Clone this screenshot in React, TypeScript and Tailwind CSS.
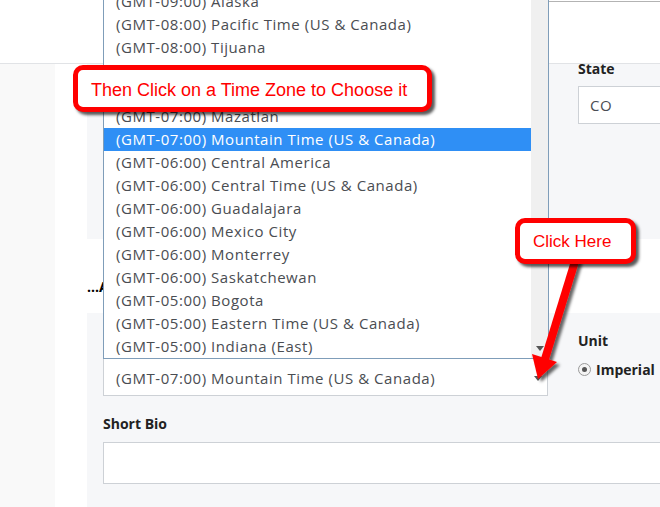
import React from "react";

const zones = [
  "(GMT-09:00) Alaska",
  "(GMT-08:00) Pacific Time (US & Canada)",
  "(GMT-08:00) Tijuana",
  "(GMT-07:00) Arizona",
  "(GMT-07:00) Chihuahua",
  "(GMT-07:00) Mazatlan",
  "(GMT-07:00) Mountain Time (US & Canada)",
  "(GMT-06:00) Central America",
  "(GMT-06:00) Central Time (US & Canada)",
  "(GMT-06:00) Guadalajara",
  "(GMT-06:00) Mexico City",
  "(GMT-06:00) Monterrey",
  "(GMT-06:00) Saskatchewan",
  "(GMT-05:00) Bogota",
  "(GMT-05:00) Eastern Time (US & Canada)",
  "(GMT-05:00) Indiana (East)",
];

const selected = "(GMT-07:00) Mountain Time (US & Canada)";

const DownTriangle = () => (
  <svg width="8" height="5" viewBox="0 0 8 5">
    <path d="M0 0 L8 0 L4 5 Z" fill="#555" />
  </svg>
);

const TimeZoneList = () => (
  <div className="absolute left-[103px] top-0 flex h-[359px] w-[446px] overflow-hidden border-x border-b border-[#7f9db9] bg-white">
    <ul className="-mt-[10px] flex-1">
      {zones.map((z) => (
        <li
          key={z}
          className={
            z === selected
              ? "h-[23px] bg-[#2f8ff5] pl-[12px] leading-[23px] text-white"
              : "h-[23px] pl-[12px] leading-[23px] text-[#4a4d52]"
          }
        >
          {z}
        </li>
      ))}
    </ul>
    <div className="flex w-[17px] flex-col items-center justify-end bg-[#f0f0f0] pb-[7px]">
      <DownTriangle />
    </div>
  </div>
);

const Callout = ({ className, children }: { className: string; children: React.ReactNode }) => (
  <div
    className={`absolute flex items-center rounded-[10px] border-[5px] border-[#ff0000] bg-white font-['Liberation_Sans',Arial,sans-serif] text-[#ff0000] shadow-[3px_3px_3px_rgba(0,0,0,0.65)] ${className}`}
  >
    {children}
  </div>
);

export default function App() {
  return (
    <div className="relative h-[507px] w-[660px] overflow-hidden bg-white font-['Open_Sans',sans-serif] text-[15px] tracking-[0.55px]">
      {/* header */}
      <div className="flex h-[64px] border-b border-[#e1e3e6] bg-white">
        <div className="w-[548px]" />
        <div className="mt-[1px] flex-1 border-t border-[#b3b3b3]" />
      </div>

      <div className="flex h-[443px]">
        <div className="w-[55px] bg-[#f9f9f9]" />
        <div className="w-[32px] bg-white" />
        <div className="flex w-[573px] flex-col">
          {/* first group */}
          <div className="flex h-[175px] gap-[30px] overflow-hidden bg-[#f6f7f9] pl-[16px]">
            <div className="w-[445px] shrink-0" />
            <div className="w-[200px] shrink-0">
              <div className="-mt-[4px] text-[14px] font-bold leading-[17px] tracking-normal text-[#222]">State</div>
              <div className="mt-[9px] flex h-[38px] items-center border border-[#cdd1d6] bg-white pl-[11px] text-[#4a4d52]">
                CO
              </div>
            </div>
          </div>

          {/* tab strip */}
          <div className="h-[74px] bg-white pt-[36px]">
            <span className="text-[14px] font-bold tracking-normal text-black">...A</span>
          </div>

          {/* second group */}
          <div className="flex-1 bg-[#f6f7f9] pl-[16px]">
            <div className="flex gap-[30px]">
              <div className="w-[445px] shrink-0 pt-[45px]">
                <div className="flex h-[38px] items-center justify-between border border-[#cdd1d6] bg-white pl-[12px] pr-[5px] pt-[3px] text-[#4a4d52]">
                  <span>{selected}</span>
                  <DownTriangle />
                </div>
              </div>
              <div className="w-[200px] shrink-0">
                <div className="pt-[18px] text-[14px] font-bold leading-[20px] tracking-normal text-[#222]">Unit</div>
                <label className="mt-[8px] flex items-center gap-[5px] text-[14px] font-bold tracking-normal text-[#222]">
                  <span className="flex h-[13px] w-[13px] items-center justify-center rounded-full border border-[#9a9a9a] bg-[#f4f4f4]">
                    <span className="h-[5px] w-[5px] rounded-full bg-[#555]" />
                  </span>
                  Imperial
                </label>
              </div>
            </div>
            <div className="mt-[18px] text-[14px] font-bold leading-[20px] tracking-normal text-[#222]">Short Bio</div>
            <div className="mt-[8px] h-[42px] w-[600px] border border-[#cdd1d6] bg-white" />
          </div>
        </div>
      </div>

      <TimeZoneList />

      <Callout className="left-[73px] top-[65px] h-[47px] w-[359px] pl-[13px] pt-[3px] text-[18px] tracking-normal">
        Then Click on a Time Zone to Choose it
      </Callout>

      <svg className="absolute left-0 top-0" width="660" height="507" viewBox="0 0 660 507">
        <defs>
          <filter id="sh" x="-50%" y="-50%" width="200%" height="200%">
            <feDropShadow dx="3" dy="3" stdDeviation="1.5" floodColor="#000" floodOpacity="0.6" />
          </filter>
        </defs>
        <g filter="url(#sh)">
          <line x1="576" y1="258" x2="545" y2="359" stroke="#ff0000" strokeWidth="8" />
          <polygon points="538,379 557,362 532,354" fill="#ff0000" />
        </g>
      </svg>

      <Callout className="left-[515px] top-[218px] h-[46px] w-[121px] pl-[13px] pt-[1px] text-[17px] tracking-normal">
        Click Here
      </Callout>
    </div>
  );
}
